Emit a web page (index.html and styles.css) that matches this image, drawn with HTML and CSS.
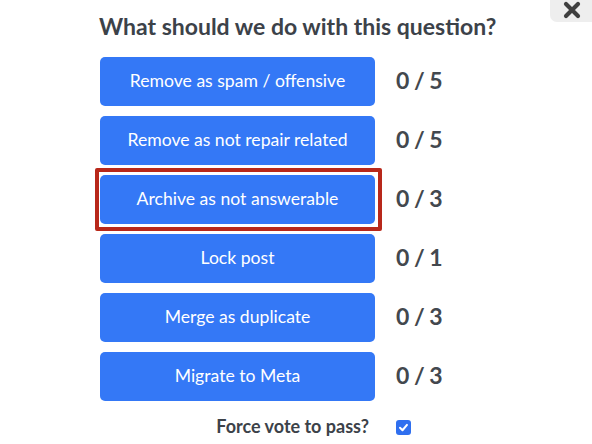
FILE: index.html
```html
<!DOCTYPE html>
<html>
<head>
<meta charset="utf-8">
<link rel="stylesheet" href="styles.css">
</head>
<body>
<div class="close">
  <svg width="20" height="20" viewBox="0 0 20 20"><path d="M4 4 L16 16 M16 4 L4 16" stroke="#3f3f3f" stroke-width="4.2" stroke-linecap="round"/></svg>
</div>
<div class="panel">
  <h1 class="title">What should we do with this question?</h1>
  <div class="rows">
    <div class="row"><div class="btn">Remove as spam / offensive</div><div class="count">0 / 5</div></div>
    <div class="row"><div class="btn">Remove as not repair related</div><div class="count">0 / 5</div></div>
    <div class="row"><div class="btn selected">Archive as not answerable</div><div class="count">0 / 3</div></div>
    <div class="row"><div class="btn">Lock post</div><div class="count">0 / 1</div></div>
    <div class="row"><div class="btn">Merge as duplicate</div><div class="count">0 / 3</div></div>
    <div class="row"><div class="btn">Migrate to Meta</div><div class="count">0 / 3</div></div>
  </div>
  <div class="force">
    <div class="force-label">Force vote to pass?</div>
    <div class="check"><svg width="11" height="11" viewBox="0 0 12 12"><path d="M2.2 6.3 L4.9 9 L9.8 3.2" stroke="#fff" stroke-width="2.2" fill="none" stroke-linecap="round" stroke-linejoin="round"/></svg></div>
  </div>
</div>
</body>
</html>
```
FILE: styles.css
```css
html, body {
  margin: 0;
  padding: 0;
  background: #ffffff;
}
body {
  font-family: Lato, "Open Sans", sans-serif;
  width: 592px;
  height: 444px;
  overflow: hidden;
  position: relative;
}
.close {
  position: absolute;
  top: -6px;
  right: -8px;
  width: 50px;
  height: 28px;
  background: #eeeeee;
  border-bottom-left-radius: 7px;
  display: flex;
  align-items: center;
  justify-content: center;
}
.close svg {
  margin-left: -6px;
  margin-top: 4px;
}
.panel {
  padding-left: 100px;
  padding-top: 12px;
}
.title {
  margin: 0 0 17px -1px;
  font-size: 23px;
  line-height: 28px;
  font-weight: 700;
  color: #3c4249;
  white-space: nowrap;
}
.rows {
  display: flex;
  flex-direction: column;
  gap: 10px;
}
.row {
  display: flex;
  align-items: center;
}
.btn {
  width: 275px;
  height: 49px;
  box-sizing: border-box;
  padding-bottom: 3px;
  background: #3478f6;
  border-radius: 5px;
  color: #ffffff;
  font-size: 17.6px;
  display: flex;
  align-items: center;
  justify-content: center;
  position: relative;
}
.btn.selected::after {
  content: "";
  position: absolute;
  left: -5px;
  top: -7px;
  right: -7px;
  bottom: -7px;
  border: 4px solid #b8281a;
  border-radius: 2px;
}
.count {
  margin-left: 21px;
  font-size: 23px;
  font-weight: 700;
  color: #43484e;
  padding-bottom: 3px;
  word-spacing: -1px;
}
.force {
  display: flex;
  align-items: flex-start;
  margin-top: 14px;
}
.force-label {
  width: 275px;
  box-sizing: border-box;
  padding-right: 6px;
  text-align: right;
  font-size: 18px;
  font-weight: 700;
  color: #3c4249;
  line-height: 22px;
}
.check {
  margin-left: 21px;
  margin-top: 5px;
  width: 15px;
  height: 15px;
  border-radius: 3px;
  background: #2f6fef;
  display: flex;
  align-items: center;
  justify-content: center;
}
```
